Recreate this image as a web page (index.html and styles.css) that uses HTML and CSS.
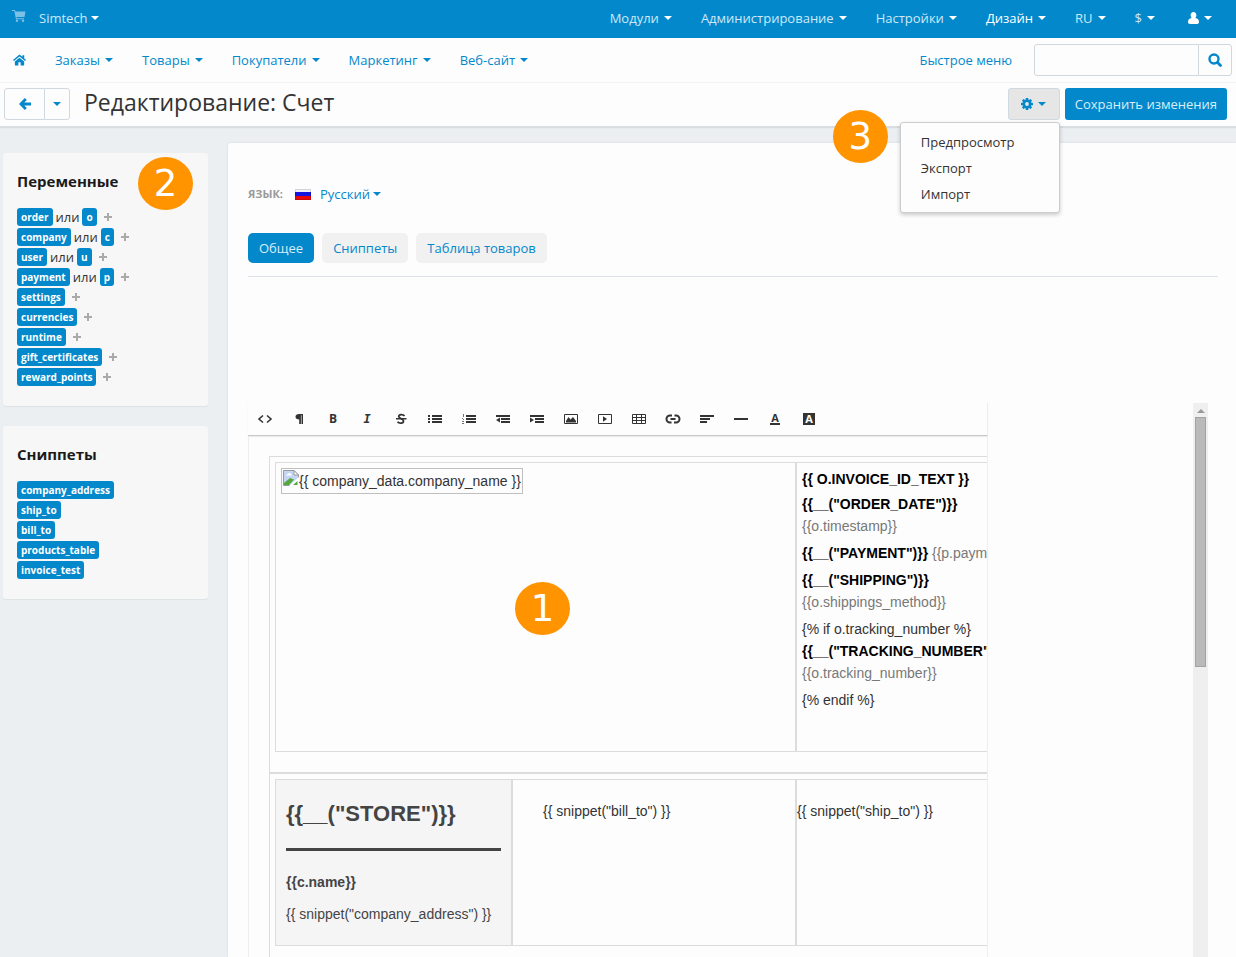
FILE: index.html
```html
<!DOCTYPE html>
<html lang="ru">
<head>
<meta charset="utf-8">
<title>Редактирование: Счет</title>
<link rel="stylesheet" href="styles.css">
</head>
<body>
<header class="topbar">
  <svg class="cart" viewBox="0 0 14 12" width="14" height="12"><path d="M0 0h3l.5 1.500H13.500L12.500 7H4.500l.3 1.200H12V9.200H4L2.300 1H0z"/><circle cx="5" cy="10.700" r="1.200"/><circle cx="11" cy="10.700" r="1.200"/></svg>
  <a class="brand caret tight" href="#">Simtech</a>
  <nav class="topnav">
    <a class="caret" href="#">Модули</a>
    <a class="caret" href="#">Администрирование</a>
    <a class="caret" href="#">Настройки</a>
    <a class="caret current" href="#">Дизайн</a>
    <a class="caret" href="#">RU</a>
    <a class="caret" href="#">$</a>
    <a class="caret current user" href="#" aria-label="Профиль"><svg viewBox="0 0 11 12" width="11" height="12"><path d="M5.500 0C7.300 0 8.400 1.300 8.400 3.200c0 1-.4 2-1 2.700C9.800 6.200 11 7.500 11 10c0 1.300-.8 2-1.800 2H1.800C.8 12 0 11.300 0 10c0-2.500 1.200-3.800 3.600-4.100-.6-.7-1-1.700-1-2.700C2.600 1.300 3.700 0 5.500 0z" fill="currentColor"/></svg></a>
  </nav>
</header>

<div class="subbar">
  <nav class="subnav">
    <a class="home" href="#" aria-label="Главная"><svg viewBox="0 0 14 12" width="13" height="12" fill="currentColor"><path d="M7 3.500 2 7.600V11q0 1 1 1h2.800V8.500h2.400V12H11q1 0 1-1V7.600z"/><path d="M7 0 0 5.900l1 1.300L7 2.300l6 4.900 1-1.300-1.900-1.600V.8h-2v1.800z"/></svg></a>
    <a class="caret" href="#">Заказы</a>
    <a class="caret" href="#">Товары</a>
    <a class="caret" href="#">Покупатели</a>
    <a class="caret" href="#">Маркетинг</a>
    <a class="caret" href="#">Веб-сайт</a>
  </nav>
  <a class="quick" href="#">Быстрое меню</a>
  <form class="search">
    <input type="text" aria-label="Поиск">
    <button type="button" aria-label="Найти"><svg viewBox="0 0 14 14" width="14" height="14" fill="none" stroke="currentColor"><circle cx="6" cy="6" r="4.500" stroke-width="2.400"/><path d="m9.500 9.500 3 3" stroke-width="2.800" stroke-linecap="round"/></svg></button>
  </form>
</div>

<div class="titlebar">
  <div class="back-group">
    <button class="back" type="button" aria-label="Назад"><svg viewBox="0 0 12 12" width="12" height="12" fill="none" stroke="currentColor" stroke-width="2.800"><path d="M6.800 1 1.900 6l4.900 5M2 6h10"/></svg></button>
    <button class="caret tight back-more" type="button" aria-label="История"></button>
  </div>
  <h1>Редактирование: Счет</h1>
  <div class="gear-wrap">
    <button class="gear caret" type="button" aria-label="Действия"><svg viewBox="0 0 12 12" width="12" height="12"><g fill="currentColor"><rect x="4.700" width="2.600" height="12" rx=".5"/><rect x="4.700" width="2.600" height="12" rx=".5" transform="rotate(45 6 6)"/><rect x="4.700" width="2.600" height="12" rx=".5" transform="rotate(90 6 6)"/><rect x="4.700" width="2.600" height="12" rx=".5" transform="rotate(135 6 6)"/><circle cx="6" cy="6" r="4.500"/></g><circle cx="6" cy="6" r="1.900" fill="#e6e6e6"/></svg></button>
    <div class="menu">
      <a href="#">Предпросмотр</a>
      <a href="#">Экспорт</a>
      <a href="#">Импорт</a>
    </div>
    <span class="callout callout-menu">3</span>
  </div>
  <button class="save" type="button">Сохранить изменения</button>
</div>

<div class="page">
  <aside class="sidebar">
    <section class="card">
      <h2>Переменные</h2>
      <span class="callout callout-vars">2</span>
      <ul>
        <li><span class="tag">order</span> или <span class="tag">o</span><i class="plus"></i></li>
        <li><span class="tag">company</span> или <span class="tag">c</span><i class="plus"></i></li>
        <li><span class="tag">user</span> или <span class="tag">u</span><i class="plus"></i></li>
        <li><span class="tag">payment</span> или <span class="tag">p</span><i class="plus"></i></li>
        <li><span class="tag">settings</span><i class="plus"></i></li>
        <li><span class="tag">currencies</span><i class="plus"></i></li>
        <li><span class="tag">runtime</span><i class="plus"></i></li>
        <li><span class="tag">gift_certificates</span><i class="plus"></i></li>
        <li><span class="tag">reward_points</span><i class="plus"></i></li>
      </ul>
    </section>
    <section class="card">
      <h2>Сниппеты</h2>
      <ul>
        <li><span class="tag">company_address</span></li>
        <li><span class="tag">ship_to</span></li>
        <li><span class="tag">bill_to</span></li>
        <li><span class="tag">products_table</span></li>
        <li><span class="tag">invoice_test</span></li>
      </ul>
    </section>
  </aside>

  <main class="content">
    <div class="lang">
      <span class="lang-label">ЯЗЫК:</span>
      <svg viewBox="0 0 16 11" width="16" height="11"><path fill="#f2f2f6" d="M0 0h16v4H0z"/><path fill="#1515e0" d="M0 3h16v4H0z"/><path fill="#e80808" d="M0 7h16v4H0z"/><path fill="none" stroke="#000" stroke-opacity=".12" d="M.5.500h15v10H.5z"/></svg>
      <a class="caret tight" href="#">Русский</a>
    </div>
    <nav class="tabs">
      <a class="active" href="#">Общее</a>
      <a href="#">Сниппеты</a>
      <a href="#">Таблица товаров</a>
    </nav>

    <div class="pane">
      <div class="editor">
        <div class="tools">
          <button type="button" aria-label="HTML"><svg viewBox="0 0 16 12"><path class="l" stroke-width="1.600" d="M6 2.500 2 6l4 3.500M10 2.500 14 6l-4 3.500"/></svg></button>
          <button type="button" aria-label="Формат"><svg viewBox="0 0 16 12"><path d="M12 1v10h-1.500V2.200H9.900V11H8.200V6.500C6 6.500 4.500 5.500 4.500 3.700S6 1 8 1z"/></svg></button>
          <button type="button" class="letter"><b>B</b></button>
          <button type="button" class="letter italic"><b>I</b></button>
          <button type="button" aria-label="Зачеркнутый"><svg viewBox="0 0 16 12"><path class="l" stroke-width="1.800" d="M11.500 3C10 1 5.500 1.200 5.800 3.600 6 5.500 10.500 5.500 10.500 8c0 2.800-4.500 2.800-6 .8"/><path d="M3 5h10.500v1.500H3z"/></svg></button>
          <button type="button" aria-label="Список"><svg viewBox="0 0 16 12"><path d="M5 2h10v2H5zm0 3h10v2H5zm0 3h10v2H5zM1 2h2v2H1zm0 3h2v2H1zm0 3h2v2H1z"/></svg></button>
          <button type="button" aria-label="Нумерованный список"><svg viewBox="0 0 16 12"><path d="M5 2h10v2H5zm0 3h10v2H5zm0 3h10v2H5z"/><path opacity=".7" d="M2 1h1v3H2zM1 5h1v1H1zm1 1h1v1H2zM1 8h2v1H1zm1 1h1v1H1v1h2V9z"/></svg></button>
          <button type="button" aria-label="Уменьшить отступ"><svg viewBox="0 0 16 12"><path d="M1 2h14v2H1zm5 3h9v2H6zm0 3h9v2H6zM1 7l4-2.500v5z"/></svg></button>
          <button type="button" aria-label="Увеличить отступ"><svg viewBox="0 0 16 12"><path d="M1 2h14v2H1zm5 3h9v2H6zm0 3h9v2H6zM5 7 1 4.500v5z"/></svg></button>
          <button type="button" aria-label="Изображение"><svg viewBox="0 0 16 12"><path class="l" d="M1.500 1.500h13v9h-13z"/><path d="M3 9.500V8l2.500-4 2 2.500L10 4l3 4v1.500z"/></svg></button>
          <button type="button" aria-label="Видео"><svg viewBox="0 0 16 12"><path class="l" d="M1.500 1.500h13v9h-13z"/><path d="M6 3.300 10 6 6 8.700z"/></svg></button>
          <button type="button" aria-label="Таблица"><svg viewBox="0 0 16 12"><path class="l" d="M1.500 1.500h13v9h-13zM1 4.500h14M1 7.500h14M5.500 1v10M10.500 1v10"/></svg></button>
          <button type="button" aria-label="Ссылка"><svg viewBox="0 0 16 12"><path class="l" stroke-width="2" d="M7 2.500H5a3.500 3.500 0 0 0 0 7h1.500M9 9.500h2a3.500 3.500 0 0 0 0-7H9.500M5.500 6h5"/></svg></button>
          <button type="button" aria-label="Выравнивание"><svg viewBox="0 0 16 12"><path d="M1 2h14v2H1zm0 3h10v2H1zm0 3h7v2H1z"/></svg></button>
          <button type="button" aria-label="Линия"><svg viewBox="0 0 16 12"><path d="M1 5h14v2H1z"/></svg></button>
          <button type="button" class="letter"><b class="under">A</b></button>
          <button type="button" class="letter"><b class="inverse">A</b></button>
        </div>
        <div class="doc">
          <div class="sheet">
            <div class="band band-top">
              <table>
                <colgroup><col class="c-wide"><col></colgroup>
                <tr>
                  <td class="logo-cell"><span class="missing"><svg viewBox="0 0 16 16" width="16" height="16"><path d="M.5.500H11L15.500 5v10.500H.5z" fill="#c5d6f5" stroke="#9a9a9a"/><path d="M3 5.500q0-1.500 2-1.500 2-2 3 .5 1 0 1 1z" fill="#fff"/><path d="M1 15v-2l6-5 4 1.500L6 15z" fill="#54a83c"/><path d="M11 .5V5h4.500z" fill="#fff" stroke="#9a9a9a"/><path d="M6 16 16 7v9z" fill="#fff"/><path d="m10 15 4.500-4v4z" fill="#54a83c"/></svg>{{ company_data.company_name }}</span></td>
                  <td class="info">
                    <h3>{{ O.INVOICE_ID_TEXT }}</h3>
                    <p><strong>{{__("ORDER_DATE")}}</strong><br><em>{{o.timestamp}}</em></p>
                    <p><strong>{{__("PAYMENT")}}</strong> <em>{{p.payment}}</em></p>
                    <p><strong>{{__("SHIPPING")}}</strong><br><em>{{o.shippings_method}}</em></p>
                    <p>{% if o.tracking_number %}<br><strong>{{__("TRACKING_NUMBER")}}</strong><br><em>{{o.tracking_number}}</em></p>
                    <p>{% endif %}</p>
                  </td>
                </tr>
              </table>
            </div>
            <div class="band">
              <table>
                <colgroup><col class="c-store"><col class="c-bill"><col></colgroup>
                <tr>
                  <td class="store">
                    <h2>{{__("STORE")}}</h2>
                    <hr>
                    <p><b>{{c.name}}</b></p>
                    <p>{{ snippet("company_address") }}</p>
                  </td>
                  <td class="bill">{{ snippet("bill_to") }}</td>
                  <td class="ship">{{ snippet("ship_to") }}</td>
                </tr>
              </table>
            </div>
          </div>
        </div>
        <span class="callout callout-doc">1</span>
      </div>
      <div class="scroll"><i class="arrow"></i><i class="thumb"></i></div>
    </div>
  </main>
</div>
</body>
</html>
```
FILE: styles.css
```css
* { box-sizing: border-box; }

body {
  margin: 0;
  height: 100vh;
  overflow: hidden;
  display: flex;
  flex-direction: column;
  background: #ebeff2;
  color: #333;
  font: 13px/20px "Open Sans", "Noto Sans", sans-serif;
}

a { color: #0388cc; text-decoration: none; }
button, input { font: inherit; }
button { padding: 0; cursor: pointer; }
ul { list-style: none; margin: 0; padding: 0; }

.caret { display: inline-flex; align-items: center; }
.caret::after {
  content: "";
  margin-left: 5px;
  border: 4px solid transparent;
  border-top-color: currentColor;
  border-bottom: 0;
}
.tight::after { margin-left: 3px; }

.topbar {
  flex: none;
  display: flex;
  align-items: center;
  height: 38px;
  padding: 0 24px 2px 12px;
  background: #0388cc;
}
.topbar a { color: #cde8f7; }
.topbar .current, .topbar .caret::after { color: #fff; }
.cart { fill: #7cc0e6; margin-bottom: 4px; }
.brand { margin-left: 13px; }
.topnav { display: flex; gap: 29px; margin-left: auto; }
.user { margin-left: 4px; }

.subbar {
  flex: none;
  display: flex;
  align-items: center;
  height: 45px;
  padding: 0 4px 0 13px;
  background: #fdfdfd;
  border-bottom: 1px solid #f3f4f5;
}
.subnav { display: flex; align-items: center; gap: 29px; }
.home { display: flex; }
.quick { margin-left: auto; }
.search { display: flex; width: 198px; height: 32px; margin-left: 22px; }
.search input, .search button { border: 1px solid #d0d8e0; background: #fdfdfd; }
.search input { flex: 1; min-width: 0; border-radius: 3px 0 0 3px; }
.search button {
  width: 34px;
  margin-left: -1px;
  display: flex;
  align-items: center;
  justify-content: center;
  color: #0388cc;
  border-radius: 0 3px 3px 0;
}

.titlebar {
  position: relative;
  z-index: 1;
  flex: none;
  display: flex;
  align-items: center;
  height: 43px;
  padding: 0 9px 1px 4px;
  background: #fdfdfd;
  box-shadow: 0 2px 1px #d9dde0;
}
.titlebar h1 { margin: 0 auto 4px 14px; font-size: 23px; line-height: 32px; font-weight: 400; }
.back-group { display: flex; height: 32px; }
.back, .back-more {
  border: 1px solid #d0d8e0;
  background: #fdfdfd;
  color: #0388cc;
  justify-content: center;
}
.back { display: flex; align-items: center; width: 41px; border-radius: 3px 0 0 3px; }
.back-more { width: 26px; margin-left: -1px; border-radius: 0 3px 3px 0; }
.back-more::after { margin-left: 0; }

.gear-wrap { position: relative; }
.gear {
  width: 52px;
  height: 32px;
  justify-content: center;
  color: #0388cc;
  background: #e6e6e6;
  border: 1px solid #d0d8e0;
  border-radius: 3px;
}
.menu {
  position: absolute;
  top: 34px;
  right: 0;
  width: 160px;
  padding: 6px 0 5px;
  background: #fdfdfd;
  border: 1px solid #ccc;
  border-radius: 3px;
  box-shadow: 0 2px 4px #0003;
}
.menu a { display: block; padding: 0 20px; line-height: 26px; color: #333; }
.save {
  height: 32px;
  margin-left: 5px;
  padding: 0 10px;
  border: 0;
  border-radius: 3px;
  background: #0388cc;
  color: #d9eefa;
}

.callout {
  position: absolute;
  width: 55px;
  height: 53px;
  border-radius: 50%;
  background: #ff9400;
  color: #fff;
  font: 37px/53px "DejaVu Sans", sans-serif;
  text-align: center;
}
.callout-menu { top: 22px; right: 172px; }
.callout-vars { top: 4px; right: 15px; }
.callout-doc { top: 179px; left: 267px; }

.page { flex: 1; min-height: 0; display: flex; gap: 20px; padding: 17px 0 0 3px; }
.sidebar { flex: none; width: 205px; padding-top: 10px; }
.card {
  position: relative;
  margin-bottom: 20px;
  padding: 13px 14px 19px;
  background: #f7f7f7;
  border-radius: 3px;
  box-shadow: 0 1px 1px #dde1e4;
}
.card h2 { margin: 0 0 11px; font-size: 15px; line-height: 30px; color: #1a1a1a; }
.card li { display: flex; align-items: center; gap: 3px; height: 20px; }
.tag {
  height: 18px;
  padding: 0 4px;
  border-radius: 3px;
  background: #0388cc;
  color: #fff;
  font-size: 10px;
  line-height: 18px;
  font-weight: 700;
}
.plus {
  width: 8px;
  height: 8px;
  margin-left: 4px;
  background:
    linear-gradient(#aaa, #aaa) center / 8px 2px no-repeat,
    linear-gradient(#aaa, #aaa) center / 2px 8px no-repeat;
}

.content {
  flex: 1;
  min-width: 0;
  display: flex;
  flex-direction: column;
  padding: 41px 18px 0 20px;
  background: #fdfdfd;
  border-radius: 3px 0 0 0;
  box-shadow: 0 0 2px #ccd0d4;
}
.lang { flex: none; display: flex; align-items: center; height: 20px; }
.lang-label { width: 47px; font-size: 11px; font-weight: 700; color: #999; }
.lang a { margin-left: 9px; }
.tabs {
  flex: none;
  display: flex;
  gap: 8px;
  margin-top: 29px;
  padding-bottom: 13px;
  border-bottom: 1px solid #dde1ec;
}
.tabs a { padding: 0 11px; border-radius: 5px; background: #f1f1f1; line-height: 30px; }
.tabs .active { background: #0388cc; color: #d9eefa; }

.pane {
  flex: 1;
  min-height: 0;
  display: flex;
  justify-content: space-between;
  margin: 126px 10px 0 0;
}
.scroll { width: 15px; padding: 6px 2px 0; background: #efefef; }
.arrow { display: block; margin: 0 2px 4px; border: 4px solid transparent; border-top: 0; border-bottom-color: #999; width: 0; }
.thumb { display: block; height: 250px; background: #bababa; border: 1px solid #a3a3a3; }

.editor {
  position: relative;
  flex: 0 1 740px;
  min-width: 0;
  display: flex;
  flex-direction: column;
  font-family: "Liberation Sans", Arial, sans-serif;
  font-size: 14px;
  line-height: 22px;
}
.tools {
  flex: none;
  display: flex;
  height: 33px;
  border-right: 1px solid #eee;
  border-bottom: 1px solid #c8c8c8;
  box-shadow: 0 1px 1px #ececec;
}
.tools button {
  width: 34px;
  border: 0;
  background: none;
  display: flex;
  align-items: center;
  justify-content: center;
  color: #333;
}
.tools svg { width: 16px; height: 12px; fill: #333; }
.tools .l { fill: none; stroke: #333; }
.letter b { font: 700 12px/12px "Open Sans", sans-serif; }
.italic b { font: italic 700 12px/12px "DejaVu Sans Mono", monospace; }
.letter .under { padding: 0 1px; line-height: 10px; border-bottom: 2px solid #333; font-size: 11px; }
.letter .inverse { width: 12px; background: #333; color: #fff; font-size: 11px; }

.doc { flex: 1; min-height: 0; overflow: hidden; padding: 20px 0 0 20px; border: 1px solid #eee; border-top: 0; border-bottom: 0; }
.sheet { width: 840px; border: 1px solid #dcdcdc; }
.band { padding: 5px 5px 20px; }
.band-top { border-bottom: 2px solid #dcdcdc; }
.band table { width: 100%; table-layout: fixed; border-collapse: separate; border-spacing: 0; }
.band td { padding: 5px; border: 1px solid #dcdcdc; vertical-align: top; }
.c-wide { width: 521px; }
.c-store { width: 237px; }
.c-bill { width: 284px; }
.band p, .band h3 { margin: 0 0 5px; font-size: 14px; }
.band .info h3 { margin-bottom: 3px; color: #000; }
.band .info { height: 290px; white-space: nowrap; }
.band strong { color: #000; }
.band em { color: #787878; font-style: normal; }
.missing { display: inline-flex; height: 26px; padding: 1px; line-height: 23px; border: 1px solid #c0c0c0; white-space: nowrap; }
.band .store { padding: 18px 10px 10px; background: #f5f5f5; color: #444; }
.store h2 { margin: 0 0 18px; font-size: 22px; line-height: 32px; }
.store hr { height: 3px; margin: 0 0 20px; border: 0; background: #444; }
.band .store p { margin-bottom: 10px; }
.band .bill { padding: 20px 30px; }
.band .ship { padding: 20px 0; }
```
